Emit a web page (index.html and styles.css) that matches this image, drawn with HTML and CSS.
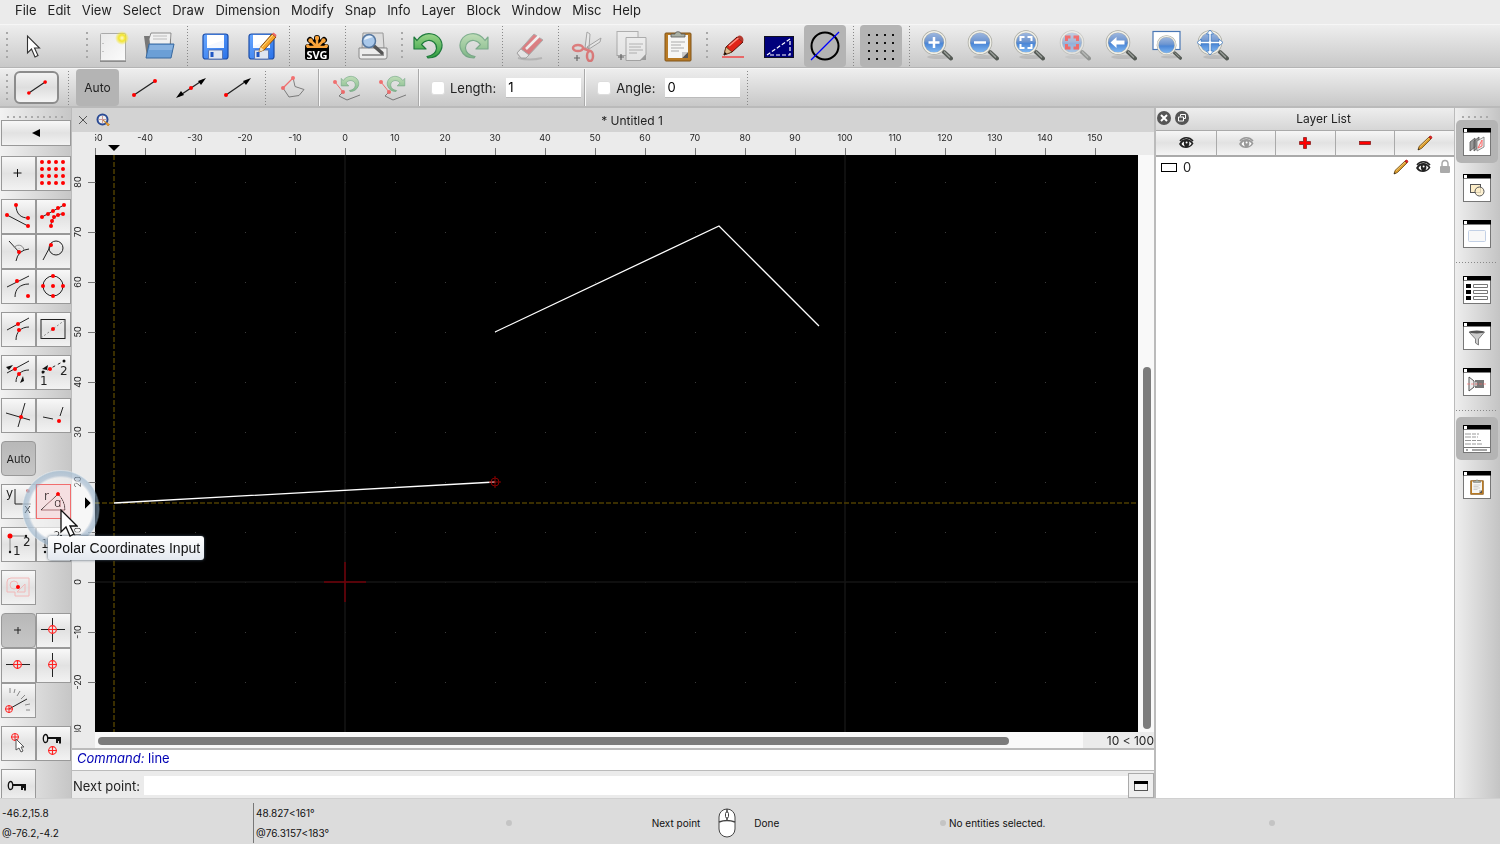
FILE: index.html
```html
<!DOCTYPE html>
<html lang="en">
<head>
    <meta charset="UTF-8">
    <meta name="viewport" content="width=device-width, initial-scale=1.0">
    <title>Untitled 1</title>
    <link rel="stylesheet" href="styles.css">
</head>
<body>
    <!-- shared icon parts -->
    <svg class="defs" aria-hidden="true">
        <defs>
            <linearGradient id="gBlue" x1="0" y1="0" x2="0" y2="1"><stop offset="0" stop-color="#a5bce0"/><stop offset=".45" stop-color="#6d95d0"/><stop offset=".55" stop-color="#4b86d6"/><stop offset="1" stop-color="#86bdf5"/></linearGradient>
            <linearGradient id="gDisk" x1="0" y1="0" x2="1" y2="1"><stop offset="0" stop-color="#6aa8ff"/><stop offset="1" stop-color="#2a72e8"/></linearGradient>
            <linearGradient id="gGreen" x1="0" y1="0" x2="0" y2="1"><stop offset="0" stop-color="#9ad58a"/><stop offset="1" stop-color="#2f9e3f"/></linearGradient>
            <linearGradient id="gPaper" x1="0" y1="0" x2="1" y2="1"><stop offset="0" stop-color="#e9e9e9"/><stop offset="1" stop-color="#fbfbfb"/></linearGradient>
            <radialGradient id="gSun"><stop offset="0" stop-color="#fffbd0"/><stop offset=".45" stop-color="#f3e52c"/><stop offset="1" stop-color="#f3e52c" stop-opacity="0"/></radialGradient>
            <symbol id="lens" viewBox="0 0 32 32">
                <ellipse cx="18" cy="27" rx="12" ry="2" fill="#000" opacity=".1"/>
                <path d="M20 20l3 3" stroke="#bbb" stroke-width="3"/>
                <path d="M23 22l7 6.500" stroke="#555a55" stroke-width="4" stroke-linecap="round"/>
                <path d="M23 21.500l6 6" stroke="#9a9f9a" stroke-width="1.200"/>
                <circle cx="13" cy="12.500" r="11" fill="url(#gBlue)" stroke="#a9a9a0" stroke-width="2.500"/>
                <circle cx="13" cy="12.500" r="10.800" fill="none" stroke="#efefe8" stroke-width="1.400"/>
            </symbol>
            <symbol id="disk" viewBox="0 0 32 32">
                <rect x="4" y="4" width="25" height="25" rx="2.500" fill="url(#gDisk)" stroke="#1c4da8" stroke-width="1.200"/>
                <rect x="8" y="5" width="17" height="13" fill="#f4f8ff"/>
                <path d="M8 5h17v5L8 16z" fill="#fff"/>
                <rect x="9.500" y="20" width="14" height="9" rx="1" fill="#dfe5f0" stroke="#4a68a8" stroke-width=".8"/>
                <rect x="11.500" y="22" width="3" height="5" fill="#1f56c4"/>
            </symbol>
            <symbol id="undo" viewBox="0 0 32 32">
                <path d="M2 7l3 3.500C9 5 15 3 20 4c8 1.500 12 9 9 16-2 5-7 8-13 8l-1-1.500c6-1 9-4 9.500-8C25 13 20 10 16 10.500c-3 .4-5 2-6.500 4L14 19H2z" fill="url(#gGreen)" stroke="#1e7a3c" stroke-width="1.200" stroke-linejoin="round"/>
            </symbol>
            <symbol id="eye" viewBox="0 0 16 14">
                <path d="M1 8C3 4 6 2.800 9 3c3 .2 5 2 6.500 4.500C13 11 10.500 12 8 12 5 12 3 11 1 8z" fill="currentColor"/>
                <path d="M2 5C5 1 11 .5 15 5" fill="none" stroke="currentColor" stroke-width="1.600"/>
                <path d="M3.500 8C4 7 5 6 6 5.600 5.600 8 6 9.500 7 10.500 5.500 10 4.200 9 3.500 8zM11 5.600c1.200.6 2 1.200 2.500 2.200-.8 1.200-1.800 2-3 2.400C11.500 9 11.600 7 11 5.600z" fill="#fff"/>
                <circle cx="8.600" cy="6.600" r="1" fill="#fff"/>
            </symbol>
            <symbol id="pencil" viewBox="0 0 16 16">
                <path d="M1 15l1-3.500L12 2l2 2L4.500 13.500z" fill="#d99a2b" stroke="#6a4a18" stroke-width=".8"/>
                <path d="M12 2l1-.8c1-.4 2 .6 1.800 1.600L14 4z" fill="#e22" stroke="#a11" stroke-width=".8"/>
                <path d="M1 15l.5-1.700 1.200 1.200z" fill="#222"/>
                <path d="M3 11.800l9-8.600" stroke="#f4cf7c" stroke-width=".8"/>
            </symbol>
            <symbol id="target" viewBox="0 0 10 10">
                <circle cx="5" cy="5" r="3.500" fill="none" stroke="#f22" stroke-width="1"/>
                <path d="M5 1v8M1 5h8" stroke="#f22" stroke-width="1"/>
            </symbol>
            <symbol id="key" viewBox="0 0 20 12">
                <ellipse cx="3.500" cy="5.500" rx="2.200" ry="4" fill="none" stroke="#111" stroke-width="1.300"/>
                <path d="M6 4h13v6.500h-2V8h-1v2h-2V6H6z" fill="#111" stroke="none"/>
            </symbol>
            <symbol id="clip" viewBox="0 0 32 32">
                <rect x="3" y="3" width="26" height="28" rx="1" fill="#b87a24" stroke="#80541a"/>
                <path d="M6 5h20v17l-6 6H6z" fill="#f6f6f4"/>
                <path d="M26 22v6h-6z" fill="#555"/><path d="M20 28v-6h6z" fill="#c9c9c9"/>
                <path d="M9 12h14M9 15h10M9 18h13M9 21h8" stroke="#aaa" stroke-width="1"/>
                <path d="M9 7V4h4c0-3 6-3 6 0h4v3z" fill="#aab0a4" stroke="#555" stroke-width=".8"/>
            </symbol>
            <symbol id="win" viewBox="0 0 28 28">
                <rect x=".5" y=".5" width="27" height="27" fill="#fff" stroke="#777"/>
                <rect width="28" height="4.500"/><rect x="1" y="1" width="3" height="3" fill="#fff"/>
            </symbol>
            <pattern id="dots" x="0" y="27" width="50" height="50" patternUnits="userSpaceOnUse"><rect width="1" height="1" fill="#3a3a3a"/></pattern>
        </defs>
    </svg>

    <nav class="menubar">
        <button>File</button><button>Edit</button><button>View</button><button>Select</button><button>Draw</button><button>Dimension</button><button>Modify</button><button>Snap</button><button>Info</button><button>Layer</button><button>Block</button><button>Window</button><button>Misc</button><button>Help</button>
    </nav>

    <div class="toolbar main-toolbar">
        <div class="group pointer-group">
            <span class="handle"></span>
            <button aria-label="Select"><svg viewBox="0 0 32 32"><path d="M10.500 6v17l4-4 3.500 8 3-1.500-3.500-7.500h5z" fill="#fff" stroke="#333" stroke-width="1.100"/></svg></button>
        </div>
        <div class="group">
            <span class="handle"></span>
            <button aria-label="New"><svg viewBox="0 0 32 32"><path d="M3 31h26" stroke="#777" stroke-width="1.500"/><rect x="3.500" y="3.500" width="25" height="27" rx="1" fill="url(#gPaper)" stroke="#aaa"/><path d="M6 13v1M6 21v1" stroke="#999"/><circle cx="25" cy="8" r="7" fill="url(#gSun)"/></svg></button>
            <button aria-label="Open"><svg viewBox="0 0 32 32"><path d="M1 6h9l1 3h17v19H4z" fill="#777"/><path d="M6 9L8 3h20l-1 14H7z" fill="#f1f1f1" stroke="#777" stroke-width=".8"/><path d="M10 6h14M10 9h14" stroke="#bbb"/><path d="M6 14h25l-3 14H3z" fill="#6b9fd6" stroke="#39699f"/><path d="M7 15h23l-1 5H6z" fill="#94bbe4" opacity=".7"/></svg></button>
            <span class="sep"></span>
            <button aria-label="Save"><svg viewBox="0 0 32 32"><use href="#disk"/></svg></button>
            <button aria-label="Save as"><svg viewBox="0 0 32 32"><use href="#disk"/><path d="M14 22l1.500-5L27 4l4 3-12 13z" fill="#f6a52b" stroke="#8a4d0c"/><path d="M27 4l1.500-1.500 3 2.500L31 7z" fill="#e66"/><path d="M14 22l1.500-5 3.500 3z" fill="#f5deb5"/><path d="M17 17L28 5" stroke="#ffdf8a"/></svg></button>
            <span class="sep"></span>
            <button aria-label="Export SVG"><svg viewBox="0 0 32 32"><path d="M4 18h24v10a2 2 0 0 1-2 2H6a2 2 0 0 1-2-2z"/><g stroke="#000" stroke-width="6" stroke-linecap="round"><path d="M16 17V8M16 17L9 10M16 17l7-7M16 17H7M16 17h9"/></g><g stroke="#f9a33a" stroke-width="2.500" stroke-linecap="round"><path d="M16 17V8M16 17l-6.500-6.500M16 17l6.500-6.500M16 17H7M16 17h9"/></g><g fill="#f9a33a"><circle cx="16" cy="8" r="2.200"/><circle cx="9.500" cy="10.500" r="2.200"/><circle cx="22.500" cy="10.500" r="2.200"/><circle cx="6.800" cy="16" r="1.800"/><circle cx="25.200" cy="16" r="1.800"/></g><path d="M4 18h24v4H4z"/><text x="16" y="29" class="svg-word">SVG</text></svg></button>
            <span class="sep"></span>
            <button aria-label="Print preview"><svg viewBox="0 0 32 32"><path d="M6 3h20l1 15H5z" fill="#ddd" stroke="#999"/><path d="M2 18h28v9q0 2-2 2H4q-2 0-2-2z" fill="#ececec" stroke="#888"/><path d="M5 25h22" stroke="#999" stroke-width="2"/><path d="M17 16l8 7" stroke="#555" stroke-width="3.500" stroke-linecap="round"/><circle cx="12" cy="11" r="6.500" fill="#a9c8ea" stroke="#56779f" stroke-width="1.500"/><path d="M7 10a5.500 5.500 0 0 1 9-3z" fill="#e8f2fc"/></svg></button>
        </div>
        <div class="group">
            <span class="handle"></span>
            <button aria-label="Undo"><svg viewBox="0 0 32 32"><use href="#undo"/></svg></button>
            <button aria-label="Redo" class="faded flip"><svg viewBox="0 0 32 32"><use href="#undo"/></svg></button>
            <span class="sep"></span>
            <button aria-label="Delete" class="faded"><svg viewBox="0 0 32 32"><path d="M4 28q12 3 24 0" stroke="#999" stroke-width="2" fill="none"/><path d="M3 23L20 4l9 6-17 18H7z" fill="#d9232b" stroke="#777"/><path d="M3 23l4-4 8 6-3 3H7z" fill="#f3f3f3" stroke="#777"/><path d="M12 19L25 6" stroke="#fff" stroke-width="2.500"/></svg></button>
            <span class="sep"></span>
            <button aria-label="Cut" class="faded"><svg viewBox="0 0 32 32"><path d="M15 18L17 2l3 2-1 14zM17 17l14-9-1 4-11 7z" fill="#eee" stroke="#666"/><ellipse cx="8" cy="18" rx="5" ry="3" fill="none" stroke="#d22" stroke-width="2.500"/><ellipse cx="20" cy="26" rx="3" ry="5" fill="none" stroke="#d22" stroke-width="2.500"/><path d="M12 18l8 3" stroke="#d22" stroke-width="2.500"/><path d="M7 25v6M4 28h6" stroke="#000" stroke-width="1.200"/></svg></button>
            <button aria-label="Copy" class="faded"><svg viewBox="0 0 32 32"><rect x="1" y="1.500" width="21" height="24" fill="#f3f3f3" stroke="#777"/><path d="M10 7.500h20v17l-5 6H10z" fill="#f8f8f8" stroke="#777"/><path d="M30 24v6h-6z" fill="#666"/><path d="M13 14h14M13 17h12M13 20h14M13 23h8" stroke="#888"/><path d="M5 24v6M2 27h6" stroke="#000" stroke-width="1.200"/></svg></button>
            <button aria-label="Paste"><svg viewBox="0 0 32 32"><use href="#clip"/></svg></button>
        </div>
        <div class="group">
            <span class="handle"></span>
            <button aria-label="Attributes"><svg viewBox="0 0 32 32"><path d="M5 27h22" stroke="red"/><path d="M7 25l2-8L20 7l6 5-11 10z" fill="#e02418" stroke="#5a120c"/><path d="M7 25l2-8 6 5z" fill="#dcb98a" stroke="#5a3b1c" stroke-width=".8"/><path d="M7 25l.8-3 2 1.700z"/><path d="M12 16L22 7.500" stroke="#ff8f80" stroke-width="1.500"/><path d="M20 7l2-1.500q4 0 4.500 4.500L26 12z" fill="#b3392e"/></svg></button>
            <button aria-label="Draft mode"><svg viewBox="0 0 32 32"><rect x="1.500" y="6.500" width="29" height="21" fill="#00007c" stroke="#112"/><path d="M4 25L27 9v16H4" fill="none" stroke="#fff" stroke-width="1.200" stroke-dasharray="4 2"/></svg></button>
            <button aria-label="Line weights" class="active"><svg viewBox="0 0 32 32"><circle cx="16" cy="16" r="13.500" fill="none" stroke="#000" stroke-width="2"/><path d="M2 30L30 2" stroke="#00f" stroke-width="1.300"/></svg></button>
            <span class="sep"></span>
            <button aria-label="Grid" class="active"><svg viewBox="0 0 32 32"><path d="M3 5h26M3 13h26M3 21h26M3 29h26" stroke="#111" stroke-width="2" stroke-dasharray="2 6"/></svg></button>
            <span class="sep"></span>
            <button aria-label="Zoom in"><svg viewBox="0 0 32 32"><use href="#lens"/><path d="M13 7v11M7.500 12.500h11" stroke="#fff" stroke-width="2.500"/></svg></button>
            <button aria-label="Zoom out"><svg viewBox="0 0 32 32"><use href="#lens"/><path d="M7 12.500h12" stroke="#fff" stroke-width="2.500"/></svg></button>
            <button aria-label="Auto zoom"><svg viewBox="0 0 32 32"><use href="#lens"/><path d="M7.500 11V7h4M14.500 7h4v4M18.500 14v4h-4M11.500 18h-4v-4" fill="none" stroke="#fff" stroke-width="2"/></svg></button>
            <button aria-label="Zoom to selection" class="faded"><svg viewBox="0 0 32 32"><use href="#lens"/><path d="M7.500 11V7h4M14.500 7h4v4M18.500 14v4h-4M11.500 18h-4v-4" fill="none" stroke="red" stroke-width="3"/></svg></button>
            <button aria-label="Previous view"><svg viewBox="0 0 32 32"><use href="#lens"/><path d="M5.500 12.500l6-5.500v3.500h8v4h-8V18z" fill="#fff"/></svg></button>
            <button aria-label="Window zoom"><svg viewBox="0 0 32 32"><rect x="2" y="1.500" width="27" height="18" fill="#fff" stroke="#4a77b5" stroke-width="1.200"/><use href="#lens" x="5" y="5" width="26" height="26"/></svg></button>
            <button aria-label="Pan"><svg viewBox="0 0 32 32"><use href="#lens"/><path d="M13 0l3.500 4h-2.300v7.300H22V9l4 3.500-4 3.500v-2.300h-7.800V21h2.300L13 25l-3.500-4h2.300v-7.300H4V16L0 12.500 4 9v2.300h7.800V4H9.500z" fill="#fff" stroke="#3e78c0" stroke-width=".8"/></svg></button>
        </div>
    </div>

    <div class="toolbar option-toolbar">
        <div class="group">
            <span class="handle"></span>
            <button aria-label="Current tool" class="current"><svg viewBox="0 0 32 32"><path d="M7 22L25 10" stroke="#222" stroke-width="1.200"/><g fill="red"><circle cx="7" cy="22" r="2"/><circle cx="25" cy="10" r="2"/></g></svg></button>
            <span class="sep"></span>
            <button class="active auto">Auto</button>
            <button aria-label="Line"><svg viewBox="0 0 32 32"><path d="M5 23L26 9" stroke="#222" stroke-width="1.300"/><g fill="red"><circle cx="5" cy="23" r="2"/><circle cx="26" cy="9" r="2"/></g></svg></button>
            <button aria-label="Construction line"><svg viewBox="0 0 32 32"><path d="M4 24L28 8" stroke="#222" stroke-width="1.300"/><path d="M31 6l-5 7-3-4zM1 26l5-7 3 4z"/><circle cx="16" cy="16" r="2" fill="red"/></svg></button>
            <button aria-label="Ray"><svg viewBox="0 0 32 32"><path d="M5 23L26 8.500" stroke="#222" stroke-width="1.300"/><path d="M30 6l-5 7-3-4z"/><circle cx="5" cy="23" r="2" fill="red"/></svg></button>
            <span class="sep"></span>
            <button aria-label="Close polyline" class="faded"><svg viewBox="0 0 32 32"><path d="M6 16l6 9 10-1.500 5-6-9-3-2-9" fill="none" stroke="#222"/><path d="M6 16L16 6" stroke="red" stroke-width="1.200"/><g fill="red"><circle cx="6" cy="16" r="2"/><circle cx="16" cy="6" r="2"/></g></svg></button>
        </div>
        <div class="group edge">
            <button aria-label="Undo segment" class="faded"><svg viewBox="0 0 32 32"><use href="#undo" x="8" y="2" width="20" height="20"/><path d="M11 20l-4 4 8 4 13-5" fill="none" stroke="#222"/><path d="M3 10l8 10" stroke="red"/><g fill="red"><circle cx="3" cy="10" r="2"/><circle cx="11" cy="20" r="2"/></g></svg></button>
            <button aria-label="Redo segment" class="faded"><svg viewBox="0 0 32 32"><g transform="translate(36 0) scale(-1 1)"><use href="#undo" x="8" y="2" width="20" height="20"/></g><path d="M11 20l-4 4 8 4 13-5" fill="none" stroke="#222"/><path d="M3 10l8 10" stroke="red"/><g fill="red"><circle cx="3" cy="10" r="2"/><circle cx="11" cy="20" r="2"/></g></svg></button>
        </div>
        <div class="group edge field">
            <input type="checkbox" id="useLength"><label for="useLength">Length:</label>
            <input type="text" value="1" aria-label="Length">
        </div>
        <div class="group edge field">
            <input type="checkbox" id="useAngle"><label for="useAngle">Angle:</label>
            <input type="text" value="0" aria-label="Angle">
            <span class="sep"></span>
        </div>
    </div>

    <main>
        <aside class="tools">
            <span class="handle-h"></span>
            <button class="back" aria-label="Back"><svg viewBox="0 0 10 8"><path d="M9 0v8L1 4z"/></svg></button>
            <div class="snap-group">
                <button aria-label="Free positioning"><svg viewBox="0 0 35 35"><path d="M16.500 13v8M12.500 17h8" stroke="#111"/></svg></button>
                <button aria-label="Snap to grid"><svg viewBox="0 0 35 35"><path d="M6 6h22M6 13h22M6 20h22M6 27h22" stroke="red" stroke-width="4" stroke-linecap="round" stroke-dasharray="0 7"/></svg></button>
            </div>
            <div class="snap-group">
                <button aria-label="Snap to end points"><svg viewBox="0 0 35 35"><path d="M15 6c0 9 5 13 12 13M6 16l21 11"/><g class="pt"><circle cx="15" cy="6" r="2"/><circle cx="27" cy="19" r="2"/><circle cx="6" cy="16" r="2"/><circle cx="27" cy="27" r="2"/></g></svg></button>
                <button aria-label="Snap on entity"><svg viewBox="0 0 35 35"><path d="M6 18L28 6M15 27c0-7 5-12 12-12"/><g class="pt"><circle cx="6" cy="18" r="2"/><circle cx="12" cy="15" r="2"/><circle cx="17" cy="12" r="2"/><circle cx="22" cy="9" r="2"/><circle cx="28" cy="6" r="2"/><circle cx="15" cy="27" r="2"/><circle cx="16" cy="22" r="2"/><circle cx="18" cy="18" r="2"/><circle cx="22" cy="16" r="2"/><circle cx="27" cy="15" r="2"/></g></svg></button>
                <button aria-label="Snap perpendicular"><svg viewBox="0 0 35 35"><path d="M8 7l10 11M28 15q-11 1-13 12"/><path class="thin" d="M13 14c2-4 9-4 10 2M18 14v.5"/><g class="pt"><circle cx="18" cy="18" r="2"/></g></svg></button>
                <button aria-label="Snap tangential"><svg viewBox="0 0 35 35"><circle cx="20" cy="14" r="7"/><path d="M7 26l8-15"/><g class="pt"><circle cx="15" cy="11" r="2"/></g></svg></button>
                <button aria-label="Snap to reference"><svg viewBox="0 0 35 35"><path d="M6 18L28 7M14 28c0-8 5-13 14-13"/><g class="pt"><circle cx="16" cy="12" r="2"/><circle cx="27" cy="27" r="2"/></g></svg></button>
                <button aria-label="Snap to center"><svg viewBox="0 0 35 35"><circle cx="17" cy="17" r="10"/><g class="pt"><circle cx="17" cy="17" r="2"/><circle cx="7" cy="17" r="2"/><circle cx="27" cy="17" r="2"/><circle cx="17" cy="7" r="2"/><circle cx="17" cy="27" r="2"/></g></svg></button>
            </div>
            <div class="snap-group">
                <button aria-label="Snap to middle"><svg viewBox="0 0 35 35"><path d="M6 18L28 6M15 28c0-8 5-13 13-13"/><g class="pt"><circle cx="17" cy="12" r="2"/><circle cx="18" cy="18" r="2"/></g></svg></button>
                <button aria-label="Snap to rectangle center"><svg viewBox="0 0 35 35"><rect x="5" y="7.500" width="24" height="19"/><path class="thin" stroke-dasharray="2 2" d="M5 26L29 8"/><g class="pt"><circle cx="17" cy="17" r="2"/></g></svg></button>
            </div>
            <div class="snap-group">
                <button aria-label="Snap by distance"><svg viewBox="0 0 35 35"><path d="M6 18L28 6M15 27c0-7 5-12 13-12"/><path class="fill" d="M5 12l7-2-4 5zM19 28l3-7 1 5z"/><g class="pt"><circle cx="14" cy="14" r="2"/><circle cx="18" cy="19" r="2"/></g></svg></button>
                <button aria-label="Snap by percentage"><svg viewBox="0 0 35 35"><path stroke-dasharray="3 3" d="M6 18L28 6"/><circle class="fill" cx="7" cy="17" r="1.500"/><circle class="fill" cx="28" cy="6" r="1.500"/><path class="fill" d="M6 14l6-4-1 5z"/><g class="pt"><circle cx="14" cy="14" r="2"/></g><text x="4" y="30">1</text><text x="24" y="20">2</text></svg></button>
            </div>
            <div class="snap-group">
                <button aria-label="Snap to intersection"><svg viewBox="0 0 35 35"><path d="M5 15l24 7M24 5l-7 24"/><g class="pt"><circle cx="20" cy="19" r="2"/></g></svg></button>
                <button aria-label="Snap to manual intersection"><svg viewBox="0 0 35 35"><path d="M7 19l10 2M27 9l-3 9"/><g class="pt"><circle cx="23" cy="23" r="2"/></g></svg></button>
            </div>
            <div class="snap-group">
                <button class="on">Auto</button>
            </div>
            <div class="snap-group">
                <button aria-label="Cartesian coordinates input"><svg viewBox="0 0 35 35"><path d="M14 5v15h16"/><circle cx="27" cy="7" r="2" class="pale"/><text x="5" y="13">y</text><text x="23" y="29">x</text></svg></button>
                <button aria-label="Polar coordinates input" class="hot"><svg viewBox="0 0 35 35"><path d="M22 10L5 26h24q0-9-7-16"/><g class="pt"><circle cx="22" cy="10" r="2"/></g><text x="8" y="16">r</text><text x="18" y="23">ɑ</text></svg></button>
            </div>
            <div class="snap-group">
                <button aria-label="Orthogonal input"><svg viewBox="0 0 35 35"><path class="thin" d="M9 9h16M9 9v16"/><circle class="fill" cx="25" cy="9" r="1.200"/><circle class="fill" cx="9" cy="25" r="1.200"/><g class="pt"><circle cx="9" cy="9" r="2.500"/></g><text x="22" y="19">2</text><text x="12" y="28">1</text></svg></button>
                <button aria-label="Relative input"><svg viewBox="0 0 35 35"><circle class="fill" cx="9" cy="25" r="1.200"/><circle class="fill" cx="25" cy="9" r="1.200"/><text x="5" y="21">1</text><text x="17" y="13">2</text></svg></button>
            </div>
            <div class="snap-group">
                <button aria-label="Auto snap"><svg viewBox="0 0 35 35"><path class="rose" d="M10 8h18v18H14v-4H6V12q0-4 4-4zM24 14v8h-8z"/><circle class="rose" cx="13" cy="15" r="4"/><g class="pt"><circle cx="17" cy="17" r="2"/></g></svg></button>
            </div>
            <div class="snap-group">
                <button aria-label="No restriction" class="on"><svg viewBox="0 0 35 35"><path d="M17 14v7M13 17h7"/></svg></button>
                <button aria-label="Restrict orthogonally"><svg viewBox="0 0 35 35"><path d="M16.500 5v24M5 16.500h24"/><use href="#target" x="11" y="11" width="11" height="11"/></svg></button>
                <button aria-label="Restrict horizontally"><svg viewBox="0 0 35 35"><path d="M5 16.500h24"/><use href="#target" x="11" y="11" width="11" height="11"/></svg></button>
                <button aria-label="Restrict vertically"><svg viewBox="0 0 35 35"><path d="M16.500 5v24"/><use href="#target" x="11" y="11" width="11" height="11"/></svg></button>
                <button aria-label="Restrict angle"><svg viewBox="0 0 35 35"><path d="M8 26l18-10"/><path class="thin" d="M9 5v5M14 6l-1 4M19 8l-3 5M24 12l-4 4M29 21l-5 1M29 27h-4"/><use href="#target" x="3" y="21" width="10" height="10"/></svg></button>
            </div>
            <div class="snap-group">
                <button aria-label="Set relative zero"><svg viewBox="0 0 35 35"><use href="#target" x="9" y="6" width="10" height="10"/><path d="M15 13v11l3-2 2 4 2-1-2-4h3z" fill="#fff" stroke="#555"/></svg></button>
                <button aria-label="Lock relative zero"><svg viewBox="0 0 35 35"><use href="#key" x="6" y="7" width="20" height="12"/><use href="#target" x="11" y="19" width="11" height="11"/></svg></button>
            </div>
            <div class="snap-group">
                <button aria-label="Lock"><svg viewBox="0 0 35 35"><use href="#key" x="6" y="11" width="20" height="12"/></svg></button>
            </div>

            <div class="glow"></div>
            <div class="spotlight"></div>
            <svg class="cursor" viewBox="0 0 18 28"><path d="M1 1v22l5-5 4 9 4-2-4-8h7z" fill="#fff" stroke="#111" stroke-width="1.300"/></svg>
            <div class="tooltip" role="tooltip">Polar Coordinates Input</div>
        </aside>

        <section class="document">
            <header class="tab">
                <button aria-label="Close drawing"><svg viewBox="0 0 10 10"><path d="M1 1l8 8M9 1L1 9" stroke="#555"/></svg></button>
                <svg class="app" viewBox="0 0 14 14"><circle cx="6.500" cy="6.500" r="5" fill="#eee" stroke="#2a4a94" stroke-width="2"/><path d="M6.500 3v7M3 6.500h7" stroke="#c99"/><path d="M7 7l5 6 1.500-1.500z" fill="#f3a32c" stroke="#a86612" stroke-width=".5"/></svg>
                <h1>* Untitled 1</h1>
            </header>
            <div class="view">
                <svg class="ruler ruler-x" id="rulerX"></svg>
                <svg class="ruler ruler-y" id="rulerY"></svg>
                <svg class="canvas">
                    <rect width="100%" height="100%" fill="#000"/>
                    <rect width="100%" height="100%" fill="url(#dots)"/>
                    <path class="axis" d="M250 0v2000M750 0v2000M0 427h3000"/>
                    <path class="origin" d="M229 427h42M250 407v40"/>
                    <path class="crosshair" d="M19 0v2000M0 348h3000"/>
                    <path class="entity" d="M400 177L624 71l100 100M19 348l381-21"/>
                    <g class="zero"><circle cx="400" cy="327" r="4"/><path d="M394 327h12M400 321v12"/></g>
                </svg>
                <div class="vscroll"><span></span></div>
                <div class="hscroll"><span></span></div>
                <div class="grid-info">10 &lt; 100</div>
            </div>
            <div class="history"><em>Command:</em> line</div>
            <div class="command">
                <label for="cmd">Next point:</label>
                <input type="text" id="cmd">
                <button aria-label="Command window"><svg viewBox="0 0 14 10"><rect x=".5" y=".5" width="13" height="9" fill="#f4f4f4" stroke="#555"/><rect width="14" height="3"/></svg></button>
            </div>
        </section>

        <section class="layers">
            <header>
                <button aria-label="Close panel"><svg viewBox="0 0 14 14"><circle cx="7" cy="7" r="7" fill="#555"/><path d="M4 4l6 6M10 4l-6 6" stroke="#fff" stroke-width="2"/></svg></button>
                <button aria-label="Float panel"><svg viewBox="0 0 14 14"><circle cx="7" cy="7" r="7" fill="#555"/><path d="M5.500 5.500v-2h5v4h-2M3.500 6h5v4h-5z" fill="none" stroke="#fff"/></svg></button>
                <h2>Layer List</h2>
            </header>
            <div class="layer-buttons">
                <button aria-label="Show all"><svg viewBox="0 0 16 14"><use href="#eye"/></svg></button>
                <button aria-label="Hide all" class="dim"><svg viewBox="0 0 16 14"><use href="#eye"/></svg></button>
                <button aria-label="Add layer"><svg viewBox="0 0 16 14"><path d="M6.500 1.500h3v4h4v3h-4v4h-3v-4h-4v-3h4z" fill="red" stroke="#822" stroke-width=".8"/></svg></button>
                <button aria-label="Remove layer"><svg viewBox="0 0 16 14"><rect x="2.500" y="5.500" width="11" height="3" fill="red" stroke="#822" stroke-width=".8"/></svg></button>
                <button aria-label="Edit layer"><svg viewBox="0 0 16 16"><use href="#pencil"/></svg></button>
            </div>
            <ul>
                <li>
                    <span class="swatch"></span>0
                    <svg class="first" viewBox="0 0 16 16"><use href="#pencil"/></svg>
                    <svg viewBox="0 0 16 14"><use href="#eye"/></svg>
                    <svg viewBox="0 0 16 16"><path d="M5 8V5q0-3.500 3-3.500T11 5v3" fill="none" stroke="#aaa" stroke-width="1.500"/><rect x="3" y="7" width="10" height="7" rx="1" fill="#aaa"/></svg>
                </li>
            </ul>
        </section>

        <aside class="docks">
            <span class="handle-h"></span>
            <button class="active" aria-label="Layer list"><svg viewBox="0 0 28 28"><use href="#win"/><path d="M7 14l5-4v9l-5 4zM11 13l5-4v10l-5 4z" fill="#999" stroke="#555" stroke-width=".8"/><path d="M14 13l7-4v10l-7 4z" fill="#eee" stroke="#777" stroke-width=".8"/><path d="M15 20l4-8v6z" fill="none" stroke="#f66"/></svg></button>
            <button aria-label="Block list"><svg viewBox="0 0 28 28"><use href="#win"/><rect x="7.500" y="10.500" width="10" height="8" fill="#fcedc8" stroke="#555"/><circle cx="16.500" cy="17.500" r="4.500" fill="#fcedc8" fill-opacity=".8" stroke="#555"/></svg></button>
            <button aria-label="View list"><svg viewBox="0 0 28 28"><use href="#win"/><rect x="5.500" y="10.500" width="17" height="11" rx="1" fill="#f8f8f8" stroke="#c3d1e6"/></svg></button>
            <span class="rule"></span>
            <button aria-label="Property editor"><svg viewBox="0 0 28 28"><use href="#win"/><path d="M3 8h5v4H3zM3 14h5v4H3zM3 20h5v4H3z"/><path d="M10.500 8.500h14v3h-14zM10.500 14.500h14v3h-14zM10.500 20.500h14v3h-14z" fill="#fff" stroke="#777"/></svg></button>
            <button aria-label="Selection filter"><svg viewBox="0 0 28 28"><use href="#win"/><path d="M6 10l6.500 7v4l3 2v-6l6-7z" fill="#ccc" stroke="#666" stroke-width=".8"/><ellipse cx="13.800" cy="10" rx="7.500" ry="1.500" fill="#555"/></svg></button>
            <button aria-label="Library browser"><svg viewBox="0 0 28 28"><use href="#win"/><path d="M6 9l5 4v6l-5 4z" fill="#eee" stroke="#555"/><rect x="12" y="12" width="9" height="8" fill="#777"/><path d="M11 14h3v4h-3z" fill="#bbb"/><path d="M4 16h20" stroke="#f66" stroke-opacity=".6" stroke-dasharray="3 1"/></svg></button>
            <span class="rule"></span>
            <button class="active" aria-label="Command line"><svg viewBox="0 0 28 28"><use href="#win"/><path d="M2 9h14M2 12h13M2 15.500h16M2 19h17" stroke="#999" stroke-dasharray="6 1 4 1"/><path d="M1 22.500h26" stroke="#777"/><path d="M3 25h2M9 25h15" stroke="#888" stroke-width="1.500"/></svg></button>
            <button aria-label="Clipboard"><svg viewBox="0 0 28 28"><use href="#win"/><use href="#clip" x="6" y="8" width="16" height="16"/></svg></button>
        </aside>
    </main>

    <footer>
        <div>-46.2,15.8<br>@-76.2,-4.2</div>
        <div class="polar">48.827&lt;161°<br>@76.3157&lt;183°</div>
        <div class="cell">
            <i class="dot"></i>
            <p>Next point
                <svg viewBox="0 0 18 30"><rect x="1" y="1" width="16" height="28" rx="8" fill="#fff" stroke="#444"/><path d="M1 14q8-3 16 0M9 1v12" fill="none" stroke="#444" stroke-width="1.500"/><rect x="7.500" y="4" width="3" height="6" rx="1.500" fill="#fff" stroke="#444"/></svg>
                Done</p>
        </div>
        <div class="cell"><i class="dot"></i>No entities selected.</div>
        <div class="cell"><i class="dot"></i></div>
    </footer>

    <script>
        const rulerX = document.getElementById('rulerX');
        const rulerY = document.getElementById('rulerY');
        const scale = 5;      // pixels per unit
        const originX = 250;
        const originY = 427;

        function drawRulers() {
            const width = rulerX.getBoundingClientRect().width;
            const height = rulerY.getBoundingClientRect().height;

            let marks = '';
            for (let x = 0; x < width - 10; x += 50) {
                const v = (x - originX) / scale;
                marks += `<path d="M${x + 0.5} 16v7"/><text x="${x}" y="9">${v}</text>`;
            }
            rulerX.innerHTML = marks + '<path class="marker" d="M13 13h12l-6 6z"/>';

            marks = '';
            for (let y = 27; y <= height; y += 50) {
                const v = (originY - y) / scale;
                marks += `<path d="M16 ${y + 0.5}h7"/><text transform="translate(9 ${y}) rotate(-90)">${v}</text>`;
            }
            rulerY.innerHTML = marks + '<path class="marker" d="M13 342v12l6-6z"/>';
        }

        drawRulers();
        window.addEventListener('resize', drawRulers);
    </script>
</body>
</html>
```
FILE: styles.css
```css
* {
    box-sizing: border-box;
}
body {
    margin: 0;
    height: 100vh;
    display: flex;
    flex-direction: column;
    overflow: hidden;
    background: #ebebeb;
    color: #222;
    font-family: Inter, "Liberation Sans", sans-serif;
    font-size: 13px;
}
button {
    padding: 0;
    border: 0;
    background: none;
    color: inherit;
    font: inherit;
}
button svg {
    display: block;
    margin: auto;
}
input {
    font: inherit;
}
.defs {
    position: absolute;
    width: 0;
    height: 0;
}
.menubar {
    height: 24px;
    display: flex;
    gap: 11px;
    padding: 0 15px 4px;
}

/* toolbars */
.toolbar {
    display: flex;
    background: linear-gradient(#eeeeee, #c8c8c8);
    border-top: 1px solid #f6f6f6;
    border-bottom: 1px solid #b4b4b4;
    padding-left: 3px;
}
.main-toolbar {
    height: 44px;
}
.option-toolbar {
    height: 40px;
    border-bottom: 2px solid #bababa;
}
.group {
    display: flex;
    align-items: center;
    gap: 4px;
    margin-right: 4px;
}
.pointer-group {
    margin-right: 29px;
}
.toolbar button {
    width: 42px;
    height: 100%;
    border-radius: 4px;
    font-size: 12px;
}
.toolbar button svg {
    width: 32px;
    height: 32px;
}
.toolbar .active, .docks .active {
    background: #b4b4b4;
}
.toolbar .auto {
    width: 43px;
    margin: 0 1px;
}
.toolbar .current {
    width: 45px;
    height: 33px;
    margin: 0 2px;
    border: 2px solid #8c8c8c;
    border-radius: 6px;
    background: linear-gradient(#f2f2f2, #dedede, #f4f4f4);
}
.toolbar .current svg {
    width: 32px;
    height: 29px;
}
.faded svg {
    opacity: 0.5;
}
.flip svg {
    transform: scaleX(-1);
}
.handle {
    width: 5px;
    height: 28px;
    background: repeating-linear-gradient(#a8a8a8 0 2px, transparent 2px 6px) right / 2px 100% no-repeat;
}
.sep {
    width: 6px;
    height: 40px;
    background: repeating-linear-gradient(#888 0 1px, transparent 1px 3px) center / 1px 100% no-repeat;
}
.option-toolbar .sep {
    height: 34px;
}
.edge {
    border-left: 1px solid #aaa;
    box-shadow: inset 1px 0 #f8f8f8;
    padding-left: 8px;
    margin-right: 3px;
}
.field {
    padding-left: 12px;
}
.field input[type="checkbox"] {
    appearance: none;
    width: 14px;
    height: 14px;
    margin: 0 1px 0 0;
    background: #fff;
    border: 1px solid #ddd;
    border-radius: 3px;
}
.field input[type="text"] {
    width: 75px;
    height: 20px;
    margin-left: 6px;
    padding: 0 2px;
    border: 0;
    border-bottom: 1px solid #bbb;
    background: #fff;
}
.svg-word {
    fill: #fff;
    font: bold 11px "Open Sans", sans-serif;
    text-anchor: middle;
}

main {
    flex: 1;
    min-height: 0;
    display: grid;
    grid-template-columns: 72px minmax(0, 1fr) 300px 45px;
    grid-template-rows: minmax(0, 1fr);
}

/* left tool column */
.tools {
    position: relative;
    background: linear-gradient(90deg, #f2f2f2, #c6c6c6);
    border-right: 1px solid #bbb;
    padding-left: 1px;
    display: flex;
    flex-direction: column;
    gap: 8px;
}
.handle-h {
    height: 2px;
    margin: 8px 7px -6px 6px;
    background: repeating-linear-gradient(90deg, #aaa 0 2px, transparent 2px 6px);
    flex: none;
}
.tools button {
    height: 35px;
    border: 1px solid #999;
    background: linear-gradient(#f8f8f8, #e2e2e2 50%, #f2f2f2);
    font-size: 11px;
}
.tools .back {
    height: 26px;
    margin-bottom: 2px;
    flex: none;
}
.back svg {
    width: 10px;
    height: 8px;
}
.snap-group {
    display: grid;
    grid-template-columns: 35px 35px;
    flex: none;
}
.tools .on {
    background: linear-gradient(#b8b8b8, #c6c6c6);
    border-radius: 4px;
}
.tools .hot {
    background: #e8b0b4;
    border-color: #d44;
}
.snap-group svg {
    width: 35px;
    height: 35px;
    margin: -1px;
    fill: none;
    stroke: #222;
    stroke-width: 1;
}
.snap-group text {
    fill: #222;
    stroke: none;
    font: 12px "DejaVu Sans", sans-serif;
}
.pt {
    fill: red;
    stroke: none;
}
.pale {
    fill: #c66;
    stroke: none;
}
.thin {
    stroke: #888;
}
.rose {
    stroke: #f2b8b8;
}
.fill {
    fill: #111;
    stroke: none;
}
.spotlight, .glow {
    position: absolute;
    left: 22px;
    top: 362px;
    width: 78px;
    height: 78px;
    border-radius: 50%;
    z-index: 1;
    pointer-events: none;
}
.glow {
    mix-blend-mode: overlay;
    background: rgba(255, 255, 255, 0.6);
}
.spotlight {
    background: radial-gradient(closest-side, transparent 80%, rgba(130, 160, 190, 0.45) 86%, rgba(140, 170, 195, 0.6) 96%, rgba(160, 185, 205, 0.1));
}
.cursor {
    position: absolute;
    left: 60px;
    top: 401px;
    width: 18px;
    height: 28px;
    z-index: 3;
}
.tooltip {
    position: absolute;
    left: 48px;
    top: 428px;
    z-index: 2;
    padding: 0 4px 0 5px;
    border-radius: 3px;
    box-shadow: 0 0 3px #456;
    background: linear-gradient(#fff, #e3e8ef);
    color: #111;
    font: 14px/24px "Liberation Sans", sans-serif;
    white-space: nowrap;
}

/* drawing area */
.document {
    display: flex;
    flex-direction: column;
    border-right: 1px solid #bbb;
}
.tab {
    height: 24px;
    background: #d3d3d3;
    display: flex;
    align-items: center;
    gap: 8px;
    padding: 0 8px 0 6px;
}
.tab button svg {
    width: 10px;
    height: 10px;
}
.app {
    width: 14px;
    height: 14px;
}
h1, h2 {
    flex: 1;
    margin: 0;
    text-align: center;
    font-size: 12px;
    font-weight: normal;
}
.view {
    flex: 1;
    min-height: 0;
    display: grid;
    grid-template-columns: 23px minmax(0, 1fr) 16px;
    grid-template-rows: 23px minmax(0, 1fr) 16px;
}
.view svg {
    width: 100%;
    height: 100%;
}
.ruler {
    stroke: #777;
    overflow: hidden;
}
.ruler text {
    fill: #222;
    stroke: none;
    font-size: 9px;
    text-anchor: middle;
}
.ruler .marker {
    fill: #000;
    stroke: none;
}
.ruler-x {
    grid-area: 1 / 2;
}
.ruler-y {
    grid-area: 2 / 1;
}
.canvas {
    grid-area: 2 / 2;
    fill: none;
}
.axis {
    stroke: #141414;
    stroke-width: 1.5;
}
.origin {
    stroke: #700008;
    stroke-width: 1.5;
}
.crosshair {
    stroke: #4e3e00;
    stroke-width: 1.5;
    stroke-dasharray: 5 2;
}
.entity {
    stroke: #fff;
    stroke-width: 1.3;
}
.zero {
    stroke: #800;
}
.vscroll {
    grid-area: 2 / 3;
    background: #f9f9f9;
    padding: 0 3px 3px 5px;
    display: flex;
    align-items: flex-end;
}
.vscroll span {
    width: 8px;
    height: 63%;
    border-radius: 4px;
    background: #7c7c7c;
}
.hscroll {
    grid-area: 3 / 2;
    margin-right: 55px;
    padding: 5px 0 3px 3px;
    background: #f9f9f9;
}
.hscroll span {
    display: block;
    width: 92.5%;
    height: 8px;
    border-radius: 4px;
    background: #7c7c7c;
}
.grid-info {
    grid-area: 3 / 2 / 4 / 4;
    justify-self: end;
    font-size: 12px;
    line-height: 17px;
}
.history {
    height: 23px;
    border-top: 2px solid #bbb;
    border-bottom: 1px solid #bbb;
    background: #fff;
    color: #0000b4;
    padding-left: 5px;
    line-height: 17px;
}
.command {
    height: 27px;
    padding-top: 2px;
    display: flex;
    align-items: center;
    gap: 4px;
}
.command label {
    padding-left: 1px;
}
.command input {
    flex: 1;
    min-width: 0;
    height: 19px;
    border: 0;
    background: #fff;
    margin-right: -4px;
}
.command button {
    width: 26px;
    height: 25px;
    border: 1px solid #aaa;
    background: #eee;
}
.command button svg {
    width: 14px;
    height: 10px;
}

/* layer panel */
.layers {
    background: #fff;
    border: solid #bbb;
    border-width: 0 1px;
    display: flex;
    flex-direction: column;
}
.layers header {
    height: 22px;
    display: flex;
    align-items: center;
    gap: 4px;
    padding: 0 0 2px 1px;
    background: linear-gradient(#eee, #d6d6d6);
}
.layers header svg {
    width: 14px;
    height: 14px;
}
.layer-buttons {
    display: grid;
    grid-template-columns: repeat(5, 1fr);
    border: solid #aaa;
    border-width: 1px 0 2px;
}
.layer-buttons button {
    height: 24px;
    background: linear-gradient(#f6f6f6, #e2e2e2 50%, #f4f4f4);
}
.layer-buttons button + button {
    border-left: 1px solid #aaa;
}
.layer-buttons svg, .layers li svg {
    width: 16px;
    height: 16px;
}
.layers .dim {
    color: #999;
}
.layers ul {
    list-style: none;
    margin: 0;
    padding: 0 1px 0 5px;
}
.layers li {
    height: 20px;
    display: flex;
    align-items: center;
    gap: 6px;
}
.layers .first {
    margin-left: auto;
}
.swatch {
    width: 16px;
    height: 9px;
    border: 1px solid #000;
}

/* right dock bar */
.docks {
    background: linear-gradient(90deg, #eee, #c4c4c4);
    padding: 0 2px 0 1px;
    display: flex;
    flex-direction: column;
    gap: 4px;
}
.docks .handle-h {
    margin: 8px 8px -2px 6px;
}
.docks button {
    height: 42px;
    flex: none;
    border-radius: 5px;
}
.docks .active {
    height: 43px;
}
.docks button svg {
    width: 28px;
    height: 28px;
}
.rule {
    height: 6px;
    flex: none;
    background: repeating-linear-gradient(90deg, #888 0 1px, transparent 1px 3px) center / 100% 1px no-repeat;
}

/* status bar, stays above the clipped tool column */
footer {
    position: relative;
    z-index: 4;
    flex: none;
    height: 46px;
    background: #dcdcdc;
    border-top: 1px solid #d0d0d0;
    padding: 4px 0 1px;
    display: grid;
    grid-template-columns: 253fr 253fr 434fr 329fr 231fr;
    color: #111;
    font-size: 10px;
    line-height: 20px;
}
footer div {
    padding-left: 2px;
}
footer .polar {
    border-left: 1px solid #777;
}
footer .cell {
    display: flex;
    align-items: center;
    gap: 3px;
    padding-left: 0;
}
.dot {
    width: 6px;
    height: 6px;
    border-radius: 50%;
    background: #c4c4c4;
}
footer p {
    margin: 0 auto;
    padding-right: 24px;
    display: flex;
    align-items: center;
    gap: 18px;
}
footer p svg {
    width: 18px;
    height: 30px;
}
```
